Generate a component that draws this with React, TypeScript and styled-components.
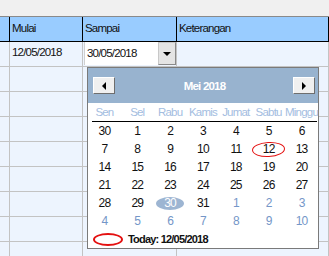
import React from 'react';
import styled, { createGlobalStyle } from 'styled-components';

const GlobalStyle = createGlobalStyle`
  html, body {
    margin: 0;
    padding: 0;
    background: #f0f0f0;
  }
  body {
    font-family: "Liberation Sans Narrow", "Liberation Sans", Arial, sans-serif;
    font-size: 11.5px;
    letter-spacing: -0.8px;
    color: #111;
  }
`;

const Page = styled.div`
  position: relative;
  width: 329px;
  height: 256px;
  overflow: hidden;
`;

const TopStrip = styled.div`
  height: 16px;
`;

const Table = styled.div`
  display: grid;
  grid-template-columns: 10px 73px 94px 1fr;
  border-top: 1px solid #8a8a8a;
`;

const HeadCell = styled.div`
  box-sizing: border-box;
  height: 25px;
  padding: 5px 0 0 2px;
  background: #99ccff;
  border-right: 1px solid #000;
  border-bottom: 1px solid #000;
`;

const Cell = styled.div`
  box-sizing: border-box;
  height: 25px;
  padding: 4px 0 0 2px;
  background: #edf4fe;
  border-right: 1px solid #c3c3c3;
  border-bottom: 1px solid #c3c3c3;
`;

const ComboCell = styled(Cell)`
  padding: 0 0 1px 1px;
  display: flex;
`;

const Combo = styled.div`
  flex: 1;
  display: flex;
  background: #fff;
  border-left: 1px solid #d0d0d0;
`;

const ComboText = styled.div`
  flex: 1;
  padding: 5px 0 0 2px;
`;

const ComboButton = styled.div`
  box-sizing: border-box;
  width: 18px;
  display: flex;
  align-items: center;
  justify-content: center;
  background: #e4e4e4;
  border: 1px solid #c8c8c8;
  border-bottom-color: #8a8a8a;
  border-right-color: #8a8a8a;
`;

const DownArrow = styled.div`
  width: 0;
  height: 0;
  border-left: 4px solid transparent;
  border-right: 4px solid transparent;
  border-top: 4px solid #000;
`;

const Popup = styled.div`
  position: absolute;
  left: 87px;
  top: 67px;
  width: 232px;
  box-sizing: border-box;
  background: #fff;
  border: 1px solid #7a7a7a;
`;

const CalHeader = styled.div`
  height: 35px;
  display: flex;
  align-items: center;
  justify-content: space-between;
  padding: 0 3px 0 5px;
  background: #98b3cf;
`;

const NavButton = styled.div`
  box-sizing: border-box;
  width: 22px;
  height: 17px;
  display: flex;
  align-items: center;
  justify-content: center;
  background: #f0f0f0;
  border: 1px solid #fff;
  border-right-color: #6e6e6e;
  border-bottom-color: #6e6e6e;
`;

const Arrow = styled.div<{ $dir: 'left' | 'right' }>`
  width: 0;
  height: 0;
  border-top: 4px solid transparent;
  border-bottom: 4px solid transparent;
  ${({ $dir }) =>
    $dir === 'left' ? 'border-right: 4px solid #000;' : 'border-left: 4px solid #000;'}
`;

const Title = styled.div`
  font-weight: bold;
  color: #fff;
  font-size: 11.5px;
  margin-left: 1px;
`;

const WeekRow = styled.div`
  position: relative;
  height: 19px;
  display: grid;
  grid-template-columns: repeat(7, 1fr);
  align-items: center;
  &::after {
    content: '';
    position: absolute;
    left: 4px;
    right: 1px;
    bottom: 0;
    height: 1px;
    background: #000;
  }
`;

const WeekDay = styled.div`
  text-align: center;
  color: #a3bddf;
  margin-top: -2px;
  white-space: nowrap;
`;

const DayGrid = styled.div`
  display: grid;
  grid-template-columns: repeat(7, 1fr);
  grid-auto-rows: 18px;
`;

const Day = styled.div<{ $other?: boolean; $selected?: boolean; $today?: boolean }>`
  position: relative;
  display: flex;
  align-items: center;
  justify-content: center;
  font-size: 12px;
  color: ${({ $other, $selected }) => ($selected ? '#fff' : $other ? '#7496c8' : '#111')};
  z-index: 0;
  &::before {
    content: '';
    position: absolute;
    z-index: -1;
    ${({ $selected }) =>
      $selected
        ? 'width: 28px; height: 13px; border-radius: 50%; background: #9db5d2;'
        : ''}
    ${({ $today }) =>
      $today
        ? 'box-sizing: border-box; width: 33px; height: 15px; border-radius: 50%; border: 1.5px solid #e41010; transform: rotate(-3deg);'
        : ''}
  }
`;

const Footer = styled.div`
  height: 18px;
  display: flex;
  align-items: center;
  gap: 5px;
  padding-left: 5px;
`;

const TodayMark = styled.div`
  box-sizing: border-box;
  width: 30px;
  height: 13px;
  border-radius: 50%;
  border: 2px solid #e41010;
`;

const TodayText = styled.div`
  font-weight: bold;
  font-size: 11px;
`;

type D = { n: number; other?: boolean };

const weeks: D[][] = [
  [{ n: 30 }, { n: 1 }, { n: 2 }, { n: 3 }, { n: 4 }, { n: 5 }, { n: 6 }],
  [{ n: 7 }, { n: 8 }, { n: 9 }, { n: 10 }, { n: 11 }, { n: 12 }, { n: 13 }],
  [{ n: 14 }, { n: 15 }, { n: 16 }, { n: 17 }, { n: 18 }, { n: 19 }, { n: 20 }],
  [{ n: 21 }, { n: 22 }, { n: 23 }, { n: 24 }, { n: 25 }, { n: 26 }, { n: 27 }],
  [
    { n: 28 }, { n: 29 }, { n: 30 }, { n: 31 },
    { n: 1, other: true }, { n: 2, other: true }, { n: 3, other: true },
  ],
  [4, 5, 6, 7, 8, 9, 10].map((n) => ({ n, other: true })),
];

const dayNames = ['Sen', 'Sel', 'Rabu', 'Kamis', 'Jumat', 'Sabtu', 'Minggu'];

const App = () => {
  const emptyRows = Array.from({ length: 8 });

  return (
    <Page>
      <GlobalStyle />
      <TopStrip />
      <Table>
        <HeadCell />
        <HeadCell>Mulai</HeadCell>
        <HeadCell>Sampai</HeadCell>
        <HeadCell>Keterangan</HeadCell>

        <Cell />
        <Cell>12/05/2018</Cell>
        <ComboCell>
          <Combo>
            <ComboText>30/05/2018</ComboText>
            <ComboButton>
              <DownArrow />
            </ComboButton>
          </Combo>
        </ComboCell>
        <Cell />

        {emptyRows.map((_, i) => (
          <React.Fragment key={i}>
            <Cell />
            <Cell />
            <Cell />
            <Cell />
          </React.Fragment>
        ))}
      </Table>

      <Popup>
        <CalHeader>
          <NavButton>
            <Arrow $dir="left" />
          </NavButton>
          <Title>Mei 2018</Title>
          <NavButton>
            <Arrow $dir="right" />
          </NavButton>
        </CalHeader>
        <WeekRow>
          {dayNames.map((d) => (
            <WeekDay key={d}>{d}</WeekDay>
          ))}
        </WeekRow>
        <DayGrid>
          {weeks.map((w, wi) =>
            w.map((d, di) => (
              <Day
                key={`${wi}-${di}`}
                $other={d.other}
                $selected={wi === 4 && di === 2}
                $today={wi === 1 && di === 5}
              >
                {d.n}
              </Day>
            ))
          )}
        </DayGrid>
        <Footer>
          <TodayMark />
          <TodayText>Today: 12/05/2018</TodayText>
        </Footer>
      </Popup>
    </Page>
  );
};

export default App;
